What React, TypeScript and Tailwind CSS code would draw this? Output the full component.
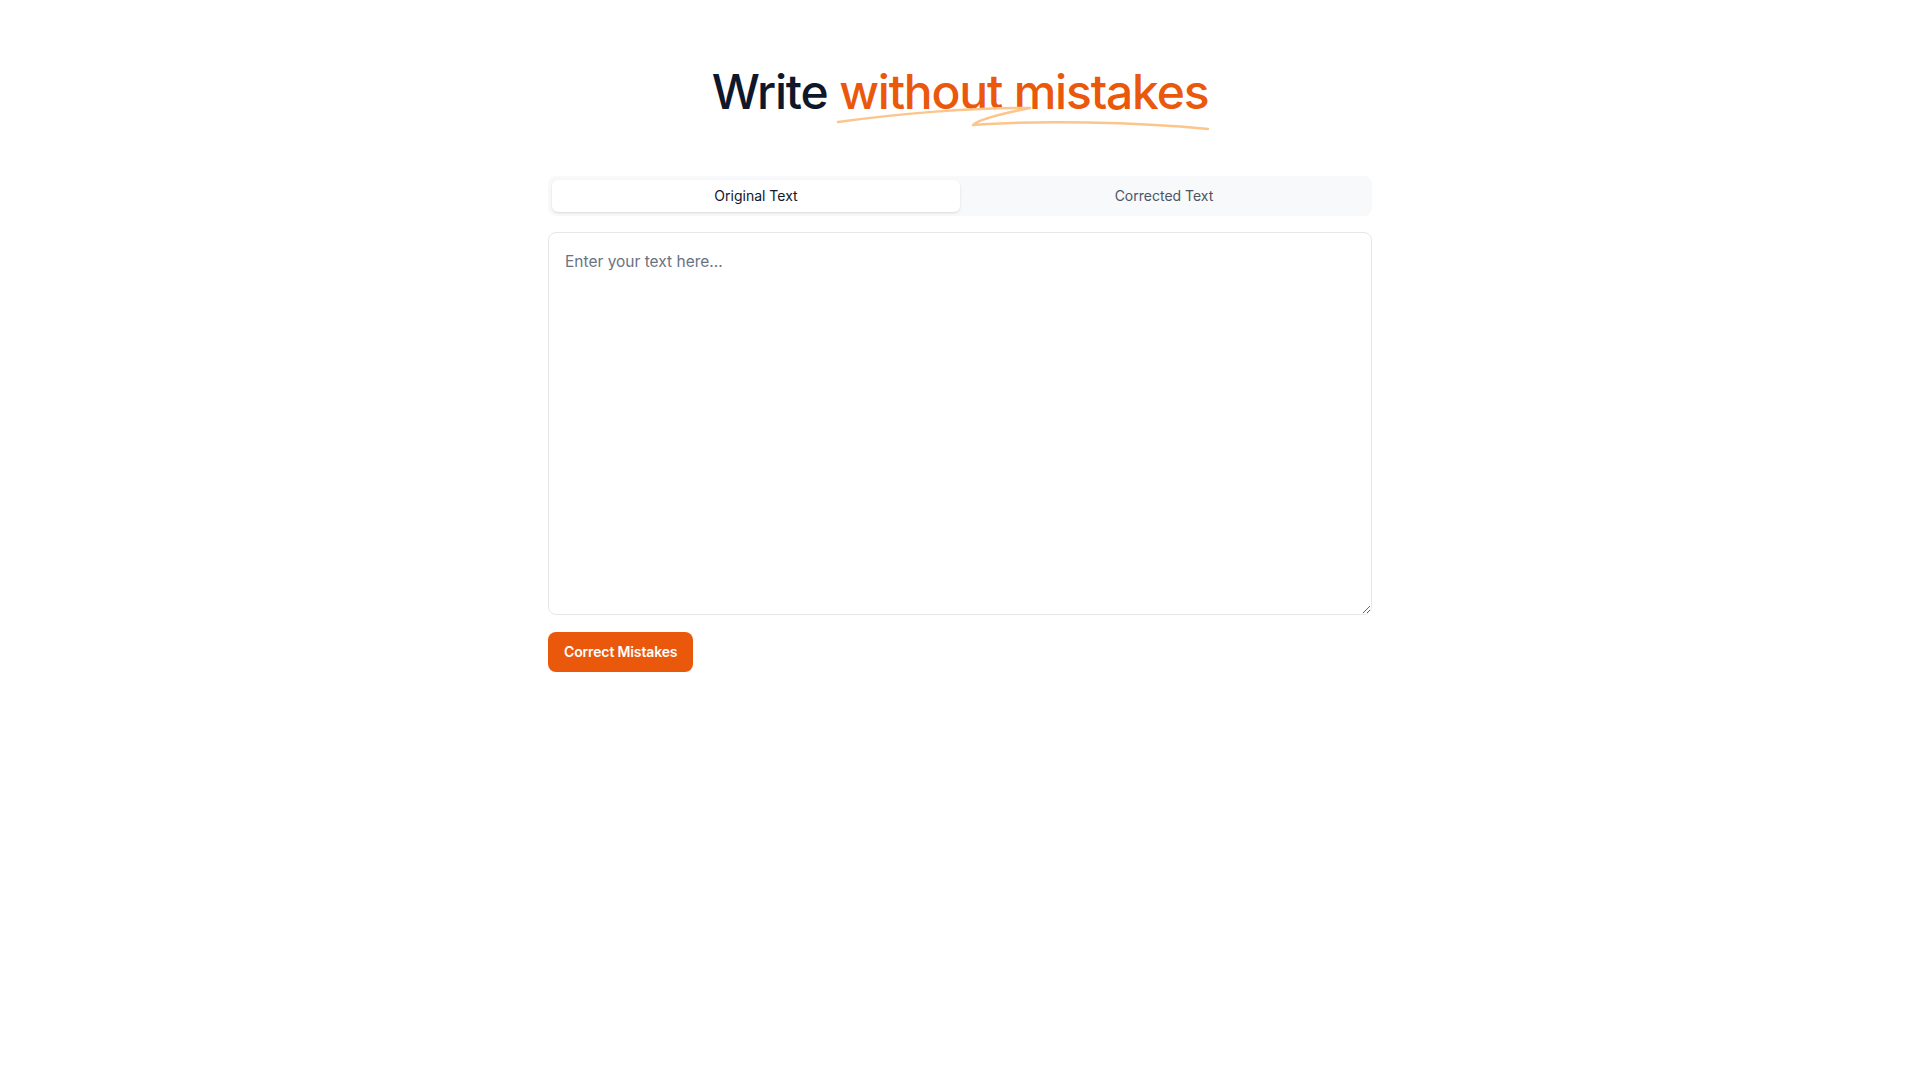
import { useState } from "react";

export default function App() {
  const [tab, setTab] = useState<"original" | "corrected">("original");
  const [text, setText] = useState("");

  return (
    <div className="min-h-screen w-full bg-white font-['Inter',sans-serif] text-gray-900">
      <div className="mx-auto flex w-[824px] flex-col pt-[68px]">
        <h1 className="text-center text-5xl leading-none font-medium tracking-tight text-[#0f172a]">
          Write{" "}
          <span className="relative inline-block text-[#ea580c]">
            without mistakes
            <svg
              className="pointer-events-none absolute top-[33px] left-[-3px] h-[30px] w-[374px]"
              viewBox="0 0 374 30"
              fill="none"
            >
              <path
                d="M2 21 C 60 13, 140 6, 194 7 C 170 12, 142 18, 137 24 C 200 19, 300 21, 372 28"
                stroke="#fbc58c"
                strokeWidth="2.5"
                strokeLinecap="round"
                strokeLinejoin="round"
              />
            </svg>
          </span>
        </h1>

        <div className="mt-[60px] grid h-10 grid-cols-2 rounded-lg bg-[#f8f9fa] p-1">
          <button
            type="button"
            onClick={() => setTab("original")}
            className={
              tab === "original"
                ? "rounded-md bg-white text-sm text-gray-900 shadow-sm"
                : "rounded-md text-sm text-gray-600"
            }
          >
            Original Text
          </button>
          <button
            type="button"
            onClick={() => setTab("corrected")}
            className={
              tab === "corrected"
                ? "rounded-md bg-white text-sm text-gray-900 shadow-sm"
                : "rounded-md text-sm text-gray-600"
            }
          >
            Corrected Text
          </button>
        </div>

        <textarea
          value={text}
          onChange={(e) => setText(e.target.value)}
          placeholder="Enter your text here..."
          className="mt-4 h-[383px] w-full rounded-lg border border-gray-200 px-4 pt-[17px] pb-3 text-[15.5px] text-gray-900 outline-none placeholder:text-gray-500"
        />

        <div className="mt-[17px]">
          <button
            type="button"
            className="h-10 rounded-lg bg-[#ea580c] px-4 text-sm font-semibold tracking-[-0.01em] text-white"
          >
            Correct Mistakes
          </button>
        </div>
      </div>
    </div>
  );
}
